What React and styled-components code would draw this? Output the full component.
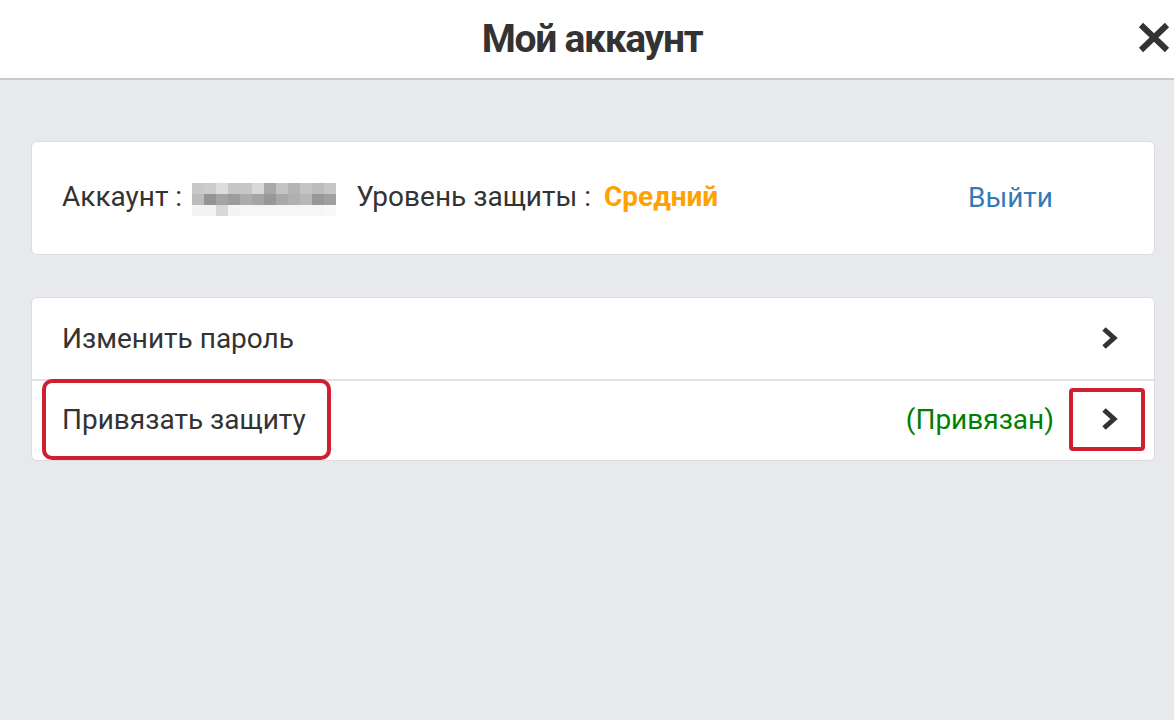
import React from 'react'
import styled, { createGlobalStyle } from 'styled-components'

const GlobalStyle = createGlobalStyle`
  html, body {
    margin: 0;
    padding: 0;
    background: #e8e9ed;
    font-family: Roboto, "Liberation Sans", sans-serif;
    color: #333;
  }
`

const Page = styled.div`
  min-height: 720px;
  background: #e8e9ed;
`

const Header = styled.header`
  height: 78px;
  background: #fff;
  border-bottom: 2px solid #c9c9cc;
  display: flex;
  align-items: center;
  justify-content: center;
  position: relative;
`

const Title = styled.h1`
  margin: 0 0 0 10px;
  font-size: 39px;
  font-weight: 700;
  color: #333;
  letter-spacing: -1.3px;
`

const Close = styled.button`
  position: absolute;
  right: 4px;
  top: 22px;
  width: 32px;
  height: 31px;
  padding: 0;
  border: 0;
  background: none;
  cursor: pointer;
`

const Main = styled.main`
  padding: 61px 19px 0 31px;
  display: flex;
  flex-direction: column;
  gap: 42px;
`

const Card = styled.section`
  background: #fff;
  border: 1px solid #dcdcdf;
  border-radius: 6px;
`

const InfoRow = styled.div`
  height: 112px;
  box-sizing: border-box;
  display: flex;
  align-items: center;
  padding: 0 101px 4px 30px;
  font-size: 28px;
`

const Label = styled.span`
  color: #333;
  margin-right: ${p => p.gap || 0}px;
`

const Level = styled.span`
  color: #ffa200;
  font-weight: 700;
  margin-left: -3px;
`

const Logout = styled.a`
  margin-left: auto;
  color: #337ab7;
  text-decoration: none;
  margin-top: 2px;
`

const Blur = styled.div`
  display: grid;
  grid-template-columns: repeat(12, 12px);
  grid-auto-rows: 11px;
  margin: 6px 20px 0 -2px;
`

const Px = styled.i`
  display: block;
  background: ${p => p.c};
`

const Row = styled.div`
  position: relative;
  height: 81px;
  box-sizing: border-box;
  display: flex;
  align-items: center;
  padding: 0 36px ${p => (p.lift ? 3 : 1)}px 30px;
  font-size: 28px;
  & + & {
    border-top: 2px solid #e3e3e6;
  }
`

const RowText = styled.span`
  flex: 1;
`

const Status = styled.span`
  color: #008000;
  margin-right: 47px;
`

const Mark = styled.div`
  position: absolute;
  border: 4px solid #d0202f;
  border-radius: ${p => p.r}px;
  box-sizing: border-box;
  left: ${p => p.x}px;
  top: ${p => p.y}px;
  width: ${p => p.w}px;
  height: ${p => p.h}px;
`

const blurRows = [
  ['#c8c8c8', '#cccccc', '#dcdcdc', '#c6c6c6', '#c6c6c6', '#d8d8d8', '#a8a8a8', '#c4c4c4', '#b4b4b4', '#c4c4c4', '#bcbcbc', '#c6c6c6'],
  ['#bcbcbc', '#949494', '#a4a4a4', '#9c9c9c', '#acacac', '#a4a4a4', '#989898', '#a8a8a8', '#b0b0b0', '#b8b8b8', '#989898', '#a0a0a0'],
  ['#f4f4f4', '#f4f4f4', '#d8d8d8', '#f4f4f4', '#f6f6f6', '#f6f6f6', '#f6f6f6', '#f6f6f6', '#f6f6f6', '#f6f6f6', '#f6f6f6', '#f8f8f8'],
]

const Chevron = () => (
  <svg width="17" height="24" viewBox="0 0 17 24">
    <polyline points="3,3 13,12 3,21" fill="none" stroke="#333" strokeWidth="5" strokeLinejoin="miter" />
  </svg>
)

const App = () => {
  return (
    <Page>
      <GlobalStyle />
      <Header>
        <Title>Мой аккаунт</Title>
        <Close aria-label="close">
          <svg width="32" height="31" viewBox="0 0 32 31">
            <path d="M3 3 L29 28 M29 3 L3 28" stroke="#333" strokeWidth="6" />
          </svg>
        </Close>
      </Header>
      <Main>
        <Card>
          <InfoRow>
            <Label gap={12}>Аккаунт :</Label>
            <Blur>
              {blurRows.map((r, i) => r.map((c, j) => <Px key={i + '-' + j} c={c} />))}
            </Blur>
            <Label gap={16}>Уровень защиты :</Label>
            <Level>Средний</Level>
            <Logout href="#">Выйти</Logout>
          </InfoRow>
        </Card>
        <Card>
          <Row>
            <RowText>Изменить пароль</RowText>
            <Chevron />
          </Row>
          <Row lift>
            <RowText>Привязать защиту</RowText>
            <Status>(Привязан)</Status>
            <Chevron />
            <Mark x={10} y={-2} w={289} h={81} r={10} />
            <Mark x={1037} y={7} w={76} h={63} r={4} />
          </Row>
        </Card>
      </Main>
    </Page>
  )
}

export default App
